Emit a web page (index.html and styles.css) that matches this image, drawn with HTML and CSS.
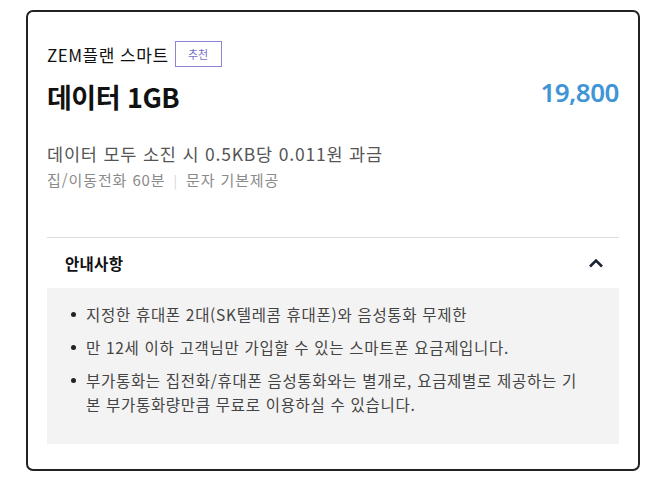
FILE: index.html
```html
<!DOCTYPE html>
<html lang="ko">
<head>
    <meta charset="UTF-8">
    <meta name="viewport" content="width=device-width, initial-scale=1.0">
    <title>ZEM플랜 스마트</title>
    <link rel="stylesheet" href="styles.css">
</head>
<body>
    <div class="plan-card">
        <div class="plan-name">
            <span>ZEM플랜 스마트</span>
            <span class="badge">추천</span>
        </div>
        <div class="plan-title-row">
            <h1 class="plan-title">데이터 1GB</h1>
            <span class="plan-price">19,800</span>
        </div>
        <p class="plan-desc">데이터 모두 소진 시 0.5KB당 0.011원 과금</p>
        <p class="plan-sub">집/이동전화 60분<span class="sep">|</span>문자 기본제공</p>

        <div class="notice">
            <div class="notice-head">
                <span>안내사항</span>
                <svg class="chevron" width="16" height="10" viewBox="0 0 16 10">
                    <path d="M2 8.5 L8 2.5 L14 8.5" fill="none" stroke="#1c2233" stroke-width="2.6" />
                </svg>
            </div>
            <ul class="notice-body">
                <li>지정한 휴대폰 2대(SK텔레콤 휴대폰)와 음성통화 무제한</li>
                <li>만 12세 이하 고객님만 가입할 수 있는 스마트폰 요금제입니다.</li>
                <li>부가통화는 집전화/휴대폰 음성통화와는 별개로, 요금제별로 제공하는 기본 부가통화량만큼 무료로 이용하실 수 있습니다.</li>
            </ul>
        </div>
    </div>
</body>
</html>
```

FILE: styles.css
```css
body {
    font-family: 'Noto Sans CJK KR', 'Noto Sans', sans-serif;
    background: #fff;
    margin: 0;
    color: #111;
}

.plan-card {
    width: 614px;
    height: 461px;
    box-sizing: border-box;
    margin: 10px 0 0 26px;
    padding: 29px 19px 26px;
    border: 2px solid #222;
    border-radius: 7px;
}

.plan-name {
    display: flex;
    align-items: center;
    gap: 6px;
    height: 26px;
    font-size: 17px;
    letter-spacing: 0.5px;
}

.badge {
    display: inline-block;
    width: 47px;
    height: 26px;
    box-sizing: border-box;
    border: 1px solid #8c84d4;
    color: #7a70c8;
    font-size: 11px;
    line-height: 24px;
    text-align: center;
    letter-spacing: 0;
}

.plan-title-row {
    display: flex;
    justify-content: space-between;
    align-items: flex-start;
    margin-top: 11px;
}

.plan-title {
    margin: 0;
    font-size: 27px;
    font-weight: 700;
    line-height: 38px;
    letter-spacing: -0.5px;
}

.plan-price {
    font-family: 'Noto Sans', sans-serif;
    color: #3f95d6;
    font-size: 26px;
    font-weight: 600;
    line-height: 28px;
    letter-spacing: -0.5px;
}

.plan-desc {
    margin: 26px 0 0;
    font-size: 17.5px;
    line-height: 24px;
    color: #555;
    letter-spacing: 0.8px;
}

.plan-sub {
    margin: 2px 0 0;
    font-size: 15px;
    line-height: 24px;
    color: #8a8a8a;
    letter-spacing: 0.9px;
}

.sep {
    color: #d4d4d4;
    margin: 0 8px;
    font-size: 13px;
}

.notice {
    margin-top: 44px;
    border-top: 1px solid #ddd;
}

.notice-head {
    display: flex;
    justify-content: space-between;
    align-items: center;
    height: 50px;
    padding: 0 15px 0 18px;
    font-size: 15.5px;
    font-weight: 700;
    letter-spacing: 0.3px;
}

.notice-body {
    list-style: none;
    margin: 0;
    padding: 14px 35px 28px 24px;
    background: #f3f3f3;
    font-size: 15.5px;
    line-height: 24px;
    color: #444;
    letter-spacing: 0.7px;
}

.notice-body li {
    position: relative;
    padding-left: 15px;
    margin-bottom: 9px;
}

.notice-body li:last-child {
    margin-bottom: 0;
}

.notice-body li::before {
    content: "";
    position: absolute;
    left: 0;
    top: 10px;
    width: 5px;
    height: 5px;
    border-radius: 50%;
    background: #222;
}
```
